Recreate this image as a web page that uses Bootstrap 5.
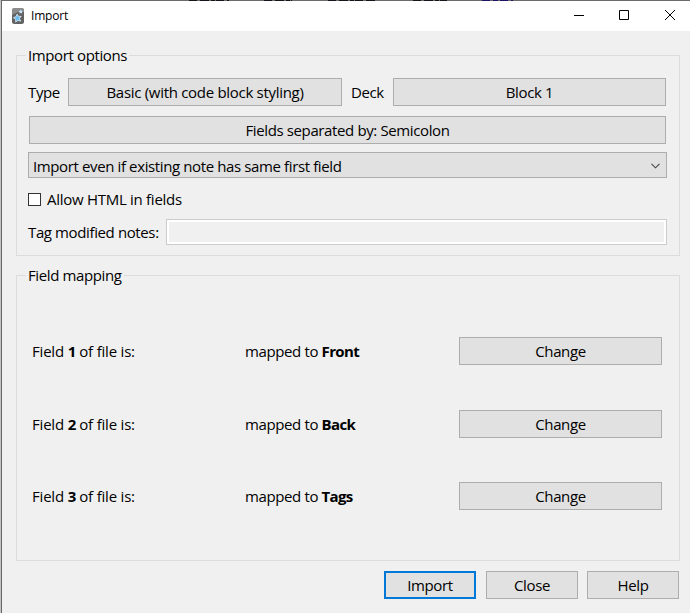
<!DOCTYPE html>
<html lang="en">
<head>
<meta charset="utf-8">
<meta name="viewport" content="width=device-width, initial-scale=1">
<title>Import</title>
<link href="https://cdn.jsdelivr.net/npm/bootstrap@5.3.0/dist/css/bootstrap.min.css" rel="stylesheet">
<style>
body{background:#f0f0f0;color:#000;font-family:"Open Sans","Noto Sans",sans-serif;font-size:15px;line-height:20px;letter-spacing:-.38px}
b{font-weight:700;letter-spacing:-.65px}
.window{height:613px;border-left:1px solid #c4c4c4}
.window-inner{border-left:1px solid #666}
.top-edge{height:1px;background:#6b6b6b}
.top-edge svg{display:block}
.title-bar{height:30px;background:#fff;padding-left:9px}
.title-text{font-size:12px;letter-spacing:-.2px;margin-left:6px}
.caption-btn{width:46px;height:30px}
.caption-btn svg{display:block}
.content{padding:14px 10px 14px 14px}
.group{border:1px solid #dcdcdc}
.group-options{height:201px;margin-top:10px;padding:0 12px 10px 11px}
.group-mapping{height:286px;margin-top:19px;padding:0 17px 0 15px}
.group-title{height:20px;line-height:18px;margin:-10px 0 0 -2px;padding:0 2px;background:#f0f0f0;align-self:flex-start}
.group-mapping .group-title{margin-left:-6px}
.btn-win{--bs-btn-color:#000;--bs-btn-bg:#e1e1e1;--bs-btn-border-color:#adadad;--bs-btn-border-radius:0;--bs-btn-font-size:15px;--bs-btn-line-height:20px;--bs-btn-padding-y:3px;--bs-btn-padding-x:4px;--bs-btn-hover-color:#000;--bs-btn-hover-bg:#e5f1fb;--bs-btn-hover-border-color:#0078d7;height:28px;letter-spacing:inherit}
.btn-default{border:2px solid #0078d7;padding:2px}
.row-type{margin-top:12px}
.type-label{width:40px}
.deck-label{width:51px;padding-left:9px}
.type-btn{width:274px;letter-spacing:-.3px}
.deck-btn{width:273px}
.sep-btn{margin:10px 1px 0}
.combo{height:26px;margin-top:8px;padding:2px 6px 0 4px;background:#e1e1e1;border:1px solid #adadad}
.check-row{height:20px;margin-top:12px;letter-spacing:-.28px}
.check-row span{padding-bottom:2px}
.check-row .check-box{width:13px;height:13px;border:1px solid #333;border-radius:0;background:#fff;margin:0 6px 1px 0}
.tag-row{margin-top:9px}
.tag-input{width:501px;height:26px;border:1px solid #ccc;border-radius:0;background:#f0f0f0;box-shadow:inset 0 0 0 2px #fff;padding:2px 4px}
.map-grid{display:grid;grid-template-columns:213px 214px 203px;grid-template-rows:28px 28px 28px;row-gap:44.5px;margin-top:51px;align-items:center}
.map-grid .field-name{letter-spacing:-.2px}
.footer-row{margin-top:10px;gap:10px;padding-right:1px}
.footer-row .btn{width:92px}
.footer-row .btn:last-child{margin-left:-1px}
</style>
<script src="https://cdn.jsdelivr.net/npm/bootstrap@5.3.0/dist/js/bootstrap.bundle.min.js"></script>
</head>
<body class="overflow-hidden">
<div class="window">
<div class="window-inner h-100">
  <div class="top-edge"><svg width="688" height="1"><path d="M187 .5h40M262 .5h28M326 .5h49M411 .5h34" stroke="#17131a" stroke-dasharray="8 3 9 2 4 1"/><path d="M480 .5h31" stroke="#1b1464" stroke-dasharray="8 3 5 2"/></svg></div>
  <header class="title-bar d-flex align-items-center">
    <svg width="14" height="18" viewBox="0 0 14 18"><rect x="1" y="1" width="12" height="16" rx="2.500" fill="#626262"/><path d="M1 8V3.500Q1 1 3.500 1h7Q13 1 13 3.500V5Q7 4 1 8Z" fill="#8c8c8c"/><path d="M6.200 7l1.300 2.400 2.700-.1-1.700 2.200 1.200 2.700-2.800-.8-2.200 1.800-.1-2.900-2.300-1.600 2.700-1z" fill="#6bbcf0" stroke="#e8f5ff" stroke-width=".7"/><path d="M9.800 2.500l.6 1.300 1.500.1-1 1.100.3 1.500-1.400-.6-1.300.7.1-1.500-1-1 1.500-.3z" fill="#c5e5fa"/></svg>
    <span class="title-text me-auto">Import</span>
    <span class="caption-btn"><svg width="46" height="30"><path d="M22 14.500h10" stroke="#000"/></svg></span>
    <span class="caption-btn"><svg width="46" height="30"><path d="M21.500 9.500h9v9h-9z" fill="none" stroke="#000"/></svg></span>
    <span class="caption-btn"><svg width="46" height="30"><path d="M21 9l10 10M31 9L21 19" stroke="#000"/></svg></span>
  </header>
  <main class="content">
    <section class="group group-options d-flex flex-column">
      <div class="group-title">Import options</div>
      <div class="row-type d-flex align-items-center">
        <span class="type-label">Type</span>
        <button class="btn btn-win type-btn">Basic (with code block styling)</button>
        <span class="deck-label">Deck</span>
        <button class="btn btn-win deck-btn">Block 1</button>
      </div>
      <button class="btn btn-win sep-btn">Fields separated by: Semicolon</button>
      <div class="combo d-flex align-items-center justify-content-between"><span>Import even if existing note has same first field</span>
        <svg width="9" height="6" viewBox="0 0 9 6"><path d="M.5 .8l4 4 4-4" fill="none" stroke="#444" stroke-width="1.100"/></svg></div>
      <label class="check-row d-flex align-items-center"><input type="checkbox" class="form-check-input check-box"><span>Allow HTML in fields</span></label>
      <div class="tag-row d-flex align-items-center justify-content-between"><label for="tags">Tag modified notes:</label><input id="tags" class="form-control tag-input" type="text"></div>
    </section>
    <section class="group group-mapping d-flex flex-column">
      <div class="group-title">Field mapping</div>
      <div class="map-grid">
        <span class="field-name">Field <b>1</b> of file is:</span><span>mapped to <b>Front</b></span><button class="btn btn-win">Change</button>
        <span class="field-name">Field <b>2</b> of file is:</span><span>mapped to <b>Back</b></span><button class="btn btn-win">Change</button>
        <span class="field-name">Field <b>3</b> of file is:</span><span>mapped to <b>Tags</b></span><button class="btn btn-win">Change</button>
      </div>
    </section>
    <footer class="footer-row d-flex justify-content-end">
      <button class="btn btn-win btn-default">Import</button><button class="btn btn-win">Close</button><button class="btn btn-win">Help</button>
    </footer>
  </main>
</div>
</div>
</body>
</html>
